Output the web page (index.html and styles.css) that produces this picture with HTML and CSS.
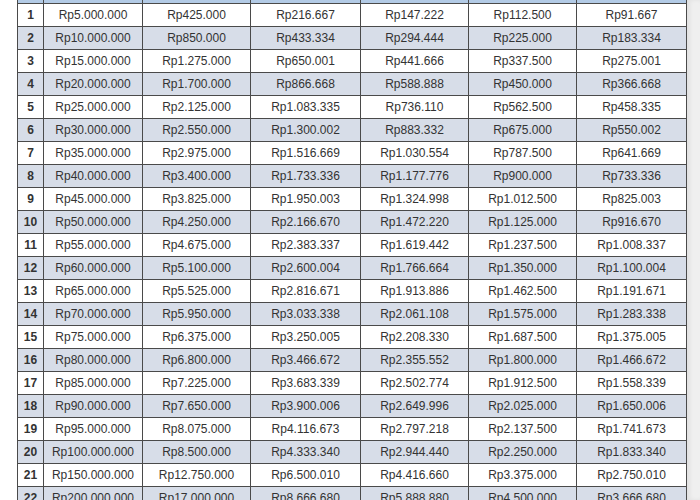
FILE: index.html
```html
<!DOCTYPE html>
<html>
<head>
<meta charset="utf-8">
<link rel="stylesheet" href="styles.css">
</head>
<body>
<div class="page">
  <div class="gutter"></div>
  <table class="grid">
    <colgroup>
      <col class="c-no"><col class="c1"><col class="c2"><col class="c3"><col class="c4"><col class="c5"><col class="c6">
    </colgroup>
    <thead>
      <tr class="head"><th></th><th></th><th></th><th></th><th></th><th></th><th></th></tr>
    </thead>
    <tbody id="rows">
      <tr><td class="no">1</td><td>Rp5.000.000</td><td>Rp425.000</td><td>Rp216.667</td><td>Rp147.222</td><td>Rp112.500</td><td>Rp91.667</td></tr>
      <tr><td class="no">2</td><td>Rp10.000.000</td><td>Rp850.000</td><td>Rp433.334</td><td>Rp294.444</td><td>Rp225.000</td><td>Rp183.334</td></tr>
      <tr><td class="no">3</td><td>Rp15.000.000</td><td>Rp1.275.000</td><td>Rp650.001</td><td>Rp441.666</td><td>Rp337.500</td><td>Rp275.001</td></tr>
      <tr><td class="no">4</td><td>Rp20.000.000</td><td>Rp1.700.000</td><td>Rp866.668</td><td>Rp588.888</td><td>Rp450.000</td><td>Rp366.668</td></tr>
      <tr><td class="no">5</td><td>Rp25.000.000</td><td>Rp2.125.000</td><td>Rp1.083.335</td><td>Rp736.110</td><td>Rp562.500</td><td>Rp458.335</td></tr>
      <tr><td class="no">6</td><td>Rp30.000.000</td><td>Rp2.550.000</td><td>Rp1.300.002</td><td>Rp883.332</td><td>Rp675.000</td><td>Rp550.002</td></tr>
      <tr><td class="no">7</td><td>Rp35.000.000</td><td>Rp2.975.000</td><td>Rp1.516.669</td><td>Rp1.030.554</td><td>Rp787.500</td><td>Rp641.669</td></tr>
      <tr><td class="no">8</td><td>Rp40.000.000</td><td>Rp3.400.000</td><td>Rp1.733.336</td><td>Rp1.177.776</td><td>Rp900.000</td><td>Rp733.336</td></tr>
      <tr><td class="no">9</td><td>Rp45.000.000</td><td>Rp3.825.000</td><td>Rp1.950.003</td><td>Rp1.324.998</td><td>Rp1.012.500</td><td>Rp825.003</td></tr>
      <tr><td class="no">10</td><td>Rp50.000.000</td><td>Rp4.250.000</td><td>Rp2.166.670</td><td>Rp1.472.220</td><td>Rp1.125.000</td><td>Rp916.670</td></tr>
      <tr><td class="no">11</td><td>Rp55.000.000</td><td>Rp4.675.000</td><td>Rp2.383.337</td><td>Rp1.619.442</td><td>Rp1.237.500</td><td>Rp1.008.337</td></tr>
      <tr><td class="no">12</td><td>Rp60.000.000</td><td>Rp5.100.000</td><td>Rp2.600.004</td><td>Rp1.766.664</td><td>Rp1.350.000</td><td>Rp1.100.004</td></tr>
      <tr><td class="no">13</td><td>Rp65.000.000</td><td>Rp5.525.000</td><td>Rp2.816.671</td><td>Rp1.913.886</td><td>Rp1.462.500</td><td>Rp1.191.671</td></tr>
      <tr><td class="no">14</td><td>Rp70.000.000</td><td>Rp5.950.000</td><td>Rp3.033.338</td><td>Rp2.061.108</td><td>Rp1.575.000</td><td>Rp1.283.338</td></tr>
      <tr><td class="no">15</td><td>Rp75.000.000</td><td>Rp6.375.000</td><td>Rp3.250.005</td><td>Rp2.208.330</td><td>Rp1.687.500</td><td>Rp1.375.005</td></tr>
      <tr><td class="no">16</td><td>Rp80.000.000</td><td>Rp6.800.000</td><td>Rp3.466.672</td><td>Rp2.355.552</td><td>Rp1.800.000</td><td>Rp1.466.672</td></tr>
      <tr><td class="no">17</td><td>Rp85.000.000</td><td>Rp7.225.000</td><td>Rp3.683.339</td><td>Rp2.502.774</td><td>Rp1.912.500</td><td>Rp1.558.339</td></tr>
      <tr><td class="no">18</td><td>Rp90.000.000</td><td>Rp7.650.000</td><td>Rp3.900.006</td><td>Rp2.649.996</td><td>Rp2.025.000</td><td>Rp1.650.006</td></tr>
      <tr><td class="no">19</td><td>Rp95.000.000</td><td>Rp8.075.000</td><td>Rp4.116.673</td><td>Rp2.797.218</td><td>Rp2.137.500</td><td>Rp1.741.673</td></tr>
      <tr><td class="no">20</td><td>Rp100.000.000</td><td>Rp8.500.000</td><td>Rp4.333.340</td><td>Rp2.944.440</td><td>Rp2.250.000</td><td>Rp1.833.340</td></tr>
      <tr><td class="no">21</td><td>Rp150.000.000</td><td>Rp12.750.000</td><td>Rp6.500.010</td><td>Rp4.416.660</td><td>Rp3.375.000</td><td>Rp2.750.010</td></tr>
      <tr><td class="no">22</td><td>Rp200.000.000</td><td>Rp17.000.000</td><td>Rp8.666.680</td><td>Rp5.888.880</td><td>Rp4.500.000</td><td>Rp3.666.680</td></tr>
    </tbody>
  </table>
  <div class="filler"></div>
</div>
</body>
</html>
```

FILE: styles.css
```css
html, body {
  margin: 0;
  padding: 0;
  height: 500px;
  overflow: hidden;
  background: #ffffff;
}

.page {
  display: flex;
  align-items: flex-start;
  height: 500px;
  overflow: hidden;
}

.gutter {
  width: 17px;
  flex: none;
}

.filler {
  flex: 1;
  align-self: stretch;
  background: #efefef;
  box-shadow: inset 3px 0 4px rgba(0, 0, 0, 0.06);
}

.grid {
  flex: none;
  width: 669px;
  border-collapse: collapse;
  table-layout: fixed;
  font-family: "Liberation Sans", Arial, sans-serif;
  font-size: 12px;
  color: #333333;
  border: 1.5px solid #4a4a4a;
  border-top: none;
}

.c-no { width: 26px; }
.c1 { width: 99px; }
.c2 { width: 108px; }
.c3 { width: 110px; }
.c4 { width: 108px; }
.c5 { width: 108px; }
.c6 { width: 110px; }

.head th {
  height: 3px;
  padding: 0;
  background: #b3cbe6;
  border-left: 1.5px solid #4a4a4a;
  border-right: 1.5px solid #4a4a4a;
  border-bottom: 1.5px solid #4a4a4a;
}

.grid td {
  height: 22px;
  padding: 0;
  text-align: center;
  border: 1.5px solid #4a4a4a;
  white-space: nowrap;
  overflow: hidden;
}

.grid tbody tr:nth-child(odd) td {
  background: #ffffff;
}

.grid tbody tr:nth-child(even) td {
  background: #d7dde8;
}

.grid td.no {
  font-weight: bold;
  color: #333;
}
```
